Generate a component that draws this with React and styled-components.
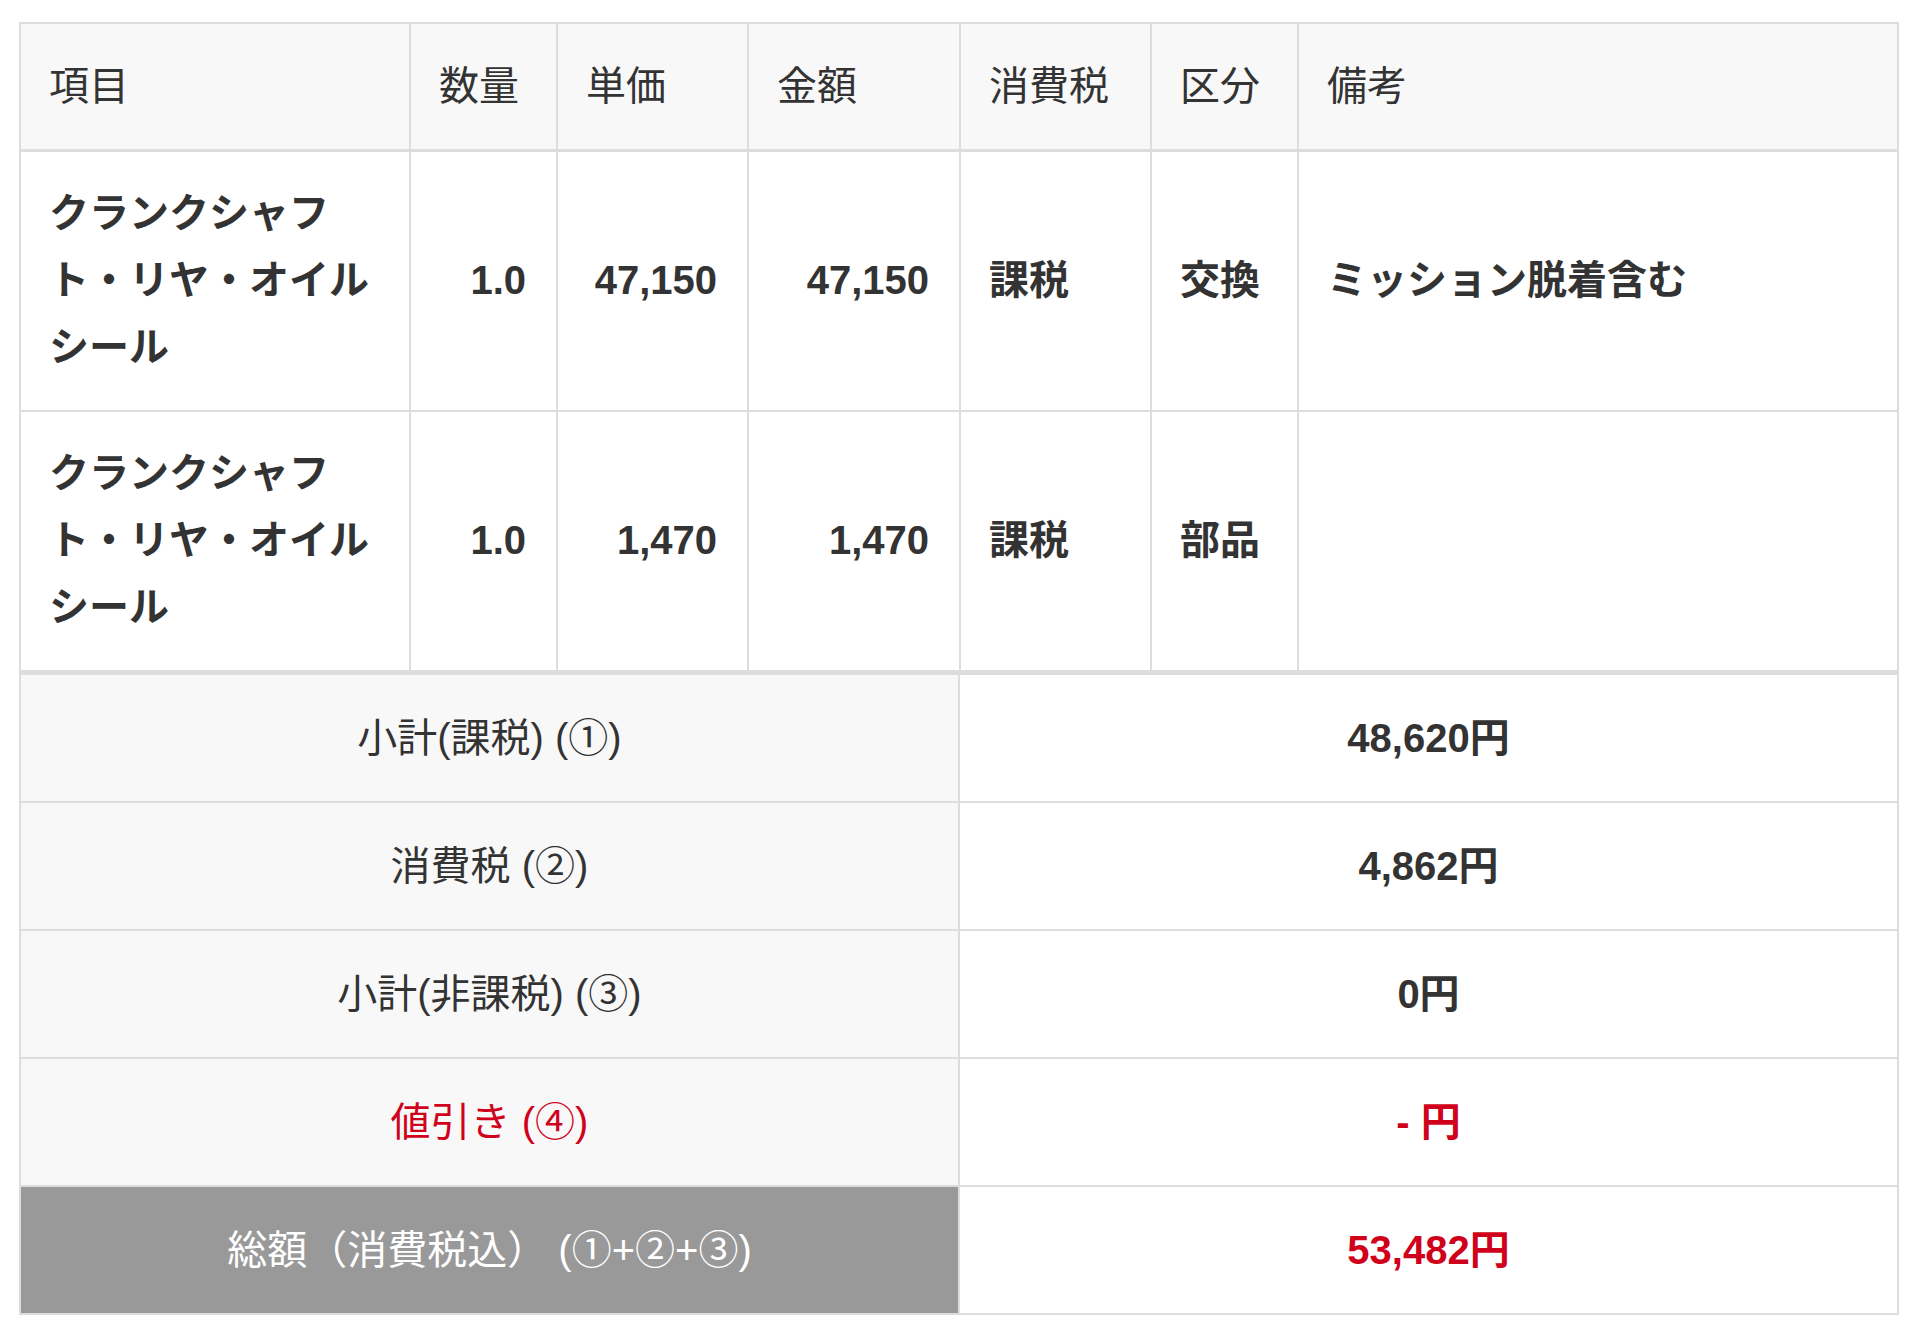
import React from 'react';
import styled, { createGlobalStyle } from 'styled-components';

const GlobalStyle = createGlobalStyle`
  body {
    margin: 0;
    background: #fff;
    font-family: "Liberation Sans", "Noto Sans CJK JP", sans-serif;
    color: #333;
  }
`;

const items = [
    { name: 'クランクシャフト・リヤ・オイルシール', qty: '1.0', price: '47,150', amount: '47,150', tax: '課税', kind: '交換', note: 'ミッション脱着含む' },
    { name: 'クランクシャフト・リヤ・オイルシール', qty: '1.0', price: '1,470', amount: '1,470', tax: '課税', kind: '部品', note: '' },
];

const totals = [
    { label: '小計(課税) (①)', value: '48,620円' },
    { label: '消費税 (②)', value: '4,862円' },
    { label: '小計(非課税) (③)', value: '0円' },
    { label: '値引き (④)', value: '- 円', red: true },
    { label: '総額（消費税込） (①+②+③)', value: '53,482円', grand: true },
];

const widths = [390, 147, 191, 212, 191, 147];

export default function App() {
    return (
        <Page>
            <GlobalStyle />
            <ItemTable>
                <colgroup>
                    {widths.map((w, i) => <col key={i} style={{ width: w }} />)}
                    <col />
                </colgroup>
                <thead>
                    <tr>
                        <HeadCell>項目</HeadCell>
                        <HeadCell>数量</HeadCell>
                        <HeadCell>単価</HeadCell>
                        <HeadCell>金額</HeadCell>
                        <HeadCell>消費税</HeadCell>
                        <HeadCell>区分</HeadCell>
                        <HeadCell>備考</HeadCell>
                    </tr>
                </thead>
                <tbody>
                    {items.map((it, i) => (
                        <tr key={i}>
                            <Cell>{it.name}</Cell>
                            <Cell $num>{it.qty}</Cell>
                            <Cell $num>{it.price}</Cell>
                            <Cell $num>{it.amount}</Cell>
                            <Cell>{it.tax}</Cell>
                            <Cell>{it.kind}</Cell>
                            <Cell>{it.note}</Cell>
                        </tr>
                    ))}
                </tbody>
            </ItemTable>
            <SummaryTable>
                <colgroup>
                    <col style={{ width: 939 }} />
                    <col />
                </colgroup>
                <tbody>
                    {totals.map((t, i) => (
                        <tr key={i}>
                            <LabelCell $red={t.red} $grand={t.grand}>{t.label}</LabelCell>
                            <ValueCell $red={t.red || t.grand}>{t.value}</ValueCell>
                        </tr>
                    ))}
                </tbody>
            </SummaryTable>
        </Page>
    );
}

const Page = styled.div`
    padding: 22px 21px 24px 19px;
`;

const ItemTable = styled.table`
    width: 100%;
    table-layout: fixed;
    border-collapse: collapse;
    font-size: 40px;
    line-height: 67px;
    border: 2px solid #ddd;
`;

const HeadCell = styled.th`
    background: #f8f8f8;
    font-weight: normal;
    text-align: left;
    padding: 29px 28px 29px 28px;
    border: 2px solid #ddd;
    border-bottom: 3px solid #ddd;
    color: #333;
`;

const Cell = styled.td`
    font-weight: bold;
    text-align: ${p => (p.$num ? 'right' : 'left')};
    padding: 28px ${p => (p.$num ? '30px' : '28px')} 29px 28px;
    border: 2px solid #ddd;
    vertical-align: middle;
    color: #333;
`;

const SummaryTable = styled.table`
    width: 100%;
    table-layout: fixed;
    border-collapse: collapse;
    font-size: 40px;
    line-height: 67px;
    border: 2px solid #ddd;
    border-top: 3px solid #ddd;
`;

const LabelCell = styled.td`
    text-align: center;
    padding: 30px 20px 29px;
    border: 2px solid #ddd;
    background: ${p => (p.$grand ? '#999' : '#f8f8f8')};
    color: ${p => (p.$grand ? '#fff' : p.$red ? '#d0021b' : '#333')};
`;

const ValueCell = styled.td`
    text-align: center;
    font-weight: bold;
    padding: 30px 20px 29px;
    border: 2px solid #ddd;
    background: #fff;
    color: ${p => (p.$red ? '#d0021b' : '#333')};
`;
